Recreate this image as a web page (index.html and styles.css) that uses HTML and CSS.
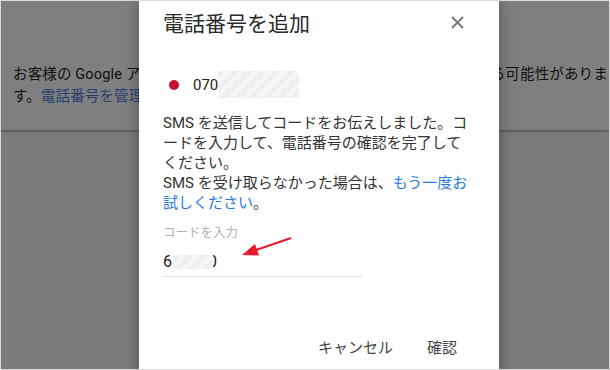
FILE: index.html
```html
<!DOCTYPE html>
<html lang="ja">
<head>
  <meta charset="UTF-8">
  <title>電話番号を追加</title>
  <link rel="stylesheet" href="styles.css">
</head>
<body>
<div class="frame">
  <!-- 後ろのページ -->
  <div class="card">
    <p class="notice">お客様の Google アカウントへのアクセスを失うと、完全にロックされ得る可能性がありま<br>す。<a class="notice-link">電話番号を管理</a>しましょう。</p>
  </div>

  <div class="scrim"></div>

  <!-- ダイアログ -->
  <div class="dialog">
    <div class="dialog-body">
      <div class="dialog-head">
        <h1 class="dialog-title">電話番号を追加</h1>
        <svg class="close" width="13" height="13" viewBox="0 0 13 13">
          <path d="M1 1L12 12M12 1L1 12" stroke="#757575" stroke-width="1.8" fill="none"/>
        </svg>
      </div>

      <div class="phone">
        <span class="dot"></span>
        <span>070</span>
        <span class="blur"></span>
      </div>

      <p class="message">SMS を送信してコードをお伝えしました。コードを入力して、電話番号の確認を完了してください。<br>SMS を受け取らなかった場合は、<a class="link">もう一度お試しください</a>。</p>

      <div class="field">
        <div class="field-label">コードを入力</div>
        <div class="field-input">
          <span>6</span>
          <span class="blur blur-small"></span>
          <span class="last-digit">0</span>
        </div>
      </div>
    </div>

    <div class="dialog-actions">
      <button class="btn">キャンセル</button>
      <button class="btn">確認</button>
    </div>

    <!-- 赤い矢印 -->
    <svg class="arrow" width="56" height="26" viewBox="0 0 56 26">
      <line x1="52" y1="4" x2="17" y2="16" stroke="#e8192c" stroke-width="2"/>
      <polygon points="3,21 20,21.5 16,10" fill="#e8192c"/>
    </svg>
  </div>
</div>
</body>
</html>
```

FILE: styles.css
```css
body {
  margin: 0;
  font-family: Roboto, "Noto Sans CJK JP", sans-serif;
}

.frame {
  width: 610px;
  height: 370px;
  box-sizing: border-box;
  border: 1px solid #dadada;
  position: relative;
  overflow: hidden;
  background: #f6f6f6;
}

.card {
  background: #fff;
  padding: 63px 0 22px 12px;
  border-bottom: 1px solid #b4b4b4;
  box-shadow: 0 1px 2px rgba(0, 0, 0, 0.2);
}

.notice {
  margin: 0;
  font-size: 14.5px;
  letter-spacing: 0.15px;
  line-height: 22px;
  color: #222;
  white-space: nowrap;
}

.notice-link {
  color: #4a7de0;
}

.scrim {
  position: absolute;
  inset: 0;
  background: rgba(0, 0, 0, 0.5);
}

.dialog {
  position: absolute;
  left: 138px;
  top: 0;
  width: 360px;
  height: 400px;
  background: #fff;
  box-shadow: 0 0 14px rgba(0, 0, 0, 0.35);
}

.dialog-body {
  padding: 9px 24px 0;
}

.dialog-head {
  display: flex;
  justify-content: space-between;
  align-items: center;
  height: 28px;
}

.dialog-title {
  margin: 0;
  font-size: 21px;
  line-height: 28px;
  font-weight: 400;
  color: #2a2a2a;
}

.close {
  margin: 0 11px 4px 0;
}

.phone {
  display: flex;
  align-items: center;
  height: 27px;
  margin-top: 33px;
  font-size: 15px;
  color: #222;
}

.dot {
  width: 10px;
  height: 10px;
  border-radius: 50%;
  background: #c8102e;
  margin: 0 14px 0 6px;
}

.blur {
  width: 81px;
  height: 27px;
  background: repeating-linear-gradient(135deg, #eeeeee 0 5px, #f6f6f6 5px 10px);
}

.message {
  margin: 15px 0 0;
  font-size: 15px;
  line-height: 20px;
  color: #333;
}

.link {
  color: #2a7ae2;
}

.field {
  margin-top: 12px;
}

.field-label {
  font-size: 12.5px;
  line-height: 16px;
  color: #b0b0b0;
}

.field-input {
  margin-top: 10px;
  width: 200px;
  display: flex;
  align-items: center;
  font-size: 16px;
  line-height: 22px;
  padding-bottom: 3px;
  border-bottom: 1px solid #e0e0e0;
  color: #222;
}

.blur-small {
  width: 40px;
  height: 14px;
  margin-left: 1px;
  z-index: 1;
}

.last-digit {
  margin-left: -5px;
}

.dialog-actions {
  display: flex;
  justify-content: flex-end;
  gap: 14px;
  padding-right: 32px;
  margin-top: 53px;
}

.btn {
  font: inherit;
  font-size: 15px;
  line-height: 36px;
  padding: 0 10px;
  background: none;
  border: 0;
  color: #444;
}

.arrow {
  position: absolute;
  left: 100px;
  top: 233px;
}
```
